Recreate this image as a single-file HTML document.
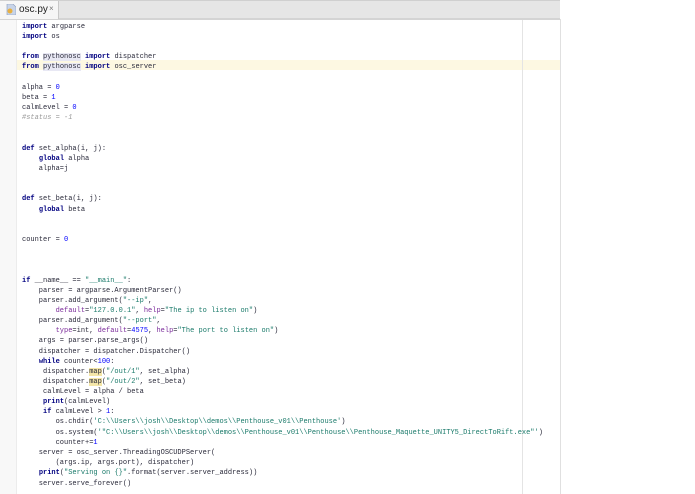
<!DOCTYPE html>
<html><head><meta charset="utf-8"><style>
body{margin:0;width:695px;height:494px;background:#fff;position:relative;overflow:hidden;font-family:"Liberation Mono",monospace}
#tabbar{position:absolute;left:0;top:0;width:560px;height:17px;background:#e6e6e6;border-top:1px solid #d0d0d0;border-bottom:2px solid #d4d4d4}
#tab{position:absolute;left:0;top:0;width:58px;height:18px;background:#f6f6f6;border-right:1px solid #c8c8c8;font-family:"Liberation Sans",sans-serif;font-size:10px;color:#222}
#ed{position:absolute;left:0;top:19px;width:560px;height:475px;background:#fff;border-right:1px solid #e0e0e0}
#gut{position:absolute;left:0;top:19px;width:16px;height:475px;background:#f8f8f8;border-right:1px solid #ececec}
#margin{position:absolute;left:522px;top:19px;width:1px;height:475px;background:#e4e4e4}
.hl{position:absolute;left:0;top:60px;width:560px;height:10px;background:#fdf8e2}
.l{position:absolute;font-size:7px;line-height:10px;white-space:pre;color:#2a2a3a;height:10px;margin-top:2px}
.k{color:#000080;font-weight:bold}
.s{color:#1a7a6a}
.n{color:#0000ff}
.p{color:#7a2a9a}
.c{color:#999;font-style:italic}
.m{background:#f4e6a8}
.b{background:#e8e8f4}
</style></head><body>
<div id="ed"></div><div class="hl"></div><div id="gut"></div><div id="margin"></div>
<div id="tabbar"><div id="tab"><svg style="position:absolute;left:6px;top:3px" width="10" height="11"><path d="M1 0h6l3 3v8H1z" fill="#c8d4e8" stroke="#8898b8" stroke-width=".6"/><circle cx="4" cy="7" r="2.5" fill="#e8b040"/></svg><span style="position:absolute;left:19px;top:3px">osc.py</span><span style="position:absolute;left:49px;top:3px;font-size:8px;color:#777">×</span></div></div>
<div class="l" style="left:22px;top:20px"><span class="k">import</span> argparse</div>
<div class="l" style="left:22px;top:30px"><span class="k">import</span> os</div>
<div class="l" style="left:22px;top:50px"><span class="k">from</span> <span class="b">pythonosc</span> <span class="k">import</span> dispatcher</div>
<div class="l" style="left:22px;top:60px"><span class="k">from</span> <span class="b">pythonosc</span> <span class="k">import</span> osc_server</div>
<div class="l" style="left:22px;top:81px">alpha = <span class="n">0</span></div>
<div class="l" style="left:22px;top:91px">beta = <span class="n">1</span></div>
<div class="l" style="left:22px;top:101px">calmLevel = <span class="n">0</span></div>
<div class="l" style="left:22px;top:111px"><span class="c">#status = -1</span></div>
<div class="l" style="left:22px;top:142px"><span class="k">def</span> set_alpha(i, j):</div>
<div class="l" style="left:22px;top:152px">    <span class="k">global</span> alpha</div>
<div class="l" style="left:22px;top:162px">    alpha=j</div>
<div class="l" style="left:22px;top:192px"><span class="k">def</span> set_beta(i, j):</div>
<div class="l" style="left:22px;top:203px">    <span class="k">global</span> beta</div>
<div class="l" style="left:22px;top:233px">counter = <span class="n">0</span></div>
<div class="l" style="left:22px;top:274px"><span class="k">if</span> __name__ == <span class="s">"__main__"</span>:</div>
<div class="l" style="left:22px;top:284px">    parser = argparse.ArgumentParser()</div>
<div class="l" style="left:22px;top:294px">    parser.add_argument(<span class="s">"--ip"</span>,</div>
<div class="l" style="left:22px;top:304px">        <span class="p">default</span>=<span class="s">"127.0.0.1"</span>, <span class="p">help</span>=<span class="s">"The ip to listen on"</span>)</div>
<div class="l" style="left:22px;top:314px">    parser.add_argument(<span class="s">"--port"</span>,</div>
<div class="l" style="left:22px;top:324px">        <span class="p">type</span>=int, <span class="p">default</span>=<span class="n">4575</span>, <span class="p">help</span>=<span class="s">"The port to listen on"</span>)</div>
<div class="l" style="left:22px;top:334px">    args = parser.parse_args()</div>
<div class="l" style="left:22px;top:345px">    dispatcher = dispatcher.Dispatcher()</div>
<div class="l" style="left:22px;top:355px">    <span class="k">while</span> counter&lt;<span class="n">100</span>:</div>
<div class="l" style="left:22px;top:365px">     dispatcher.<span class="m">map</span>(<span class="s">"/out/1"</span>, set_alpha)</div>
<div class="l" style="left:22px;top:375px">     dispatcher.<span class="m">map</span>(<span class="s">"/out/2"</span>, set_beta)</div>
<div class="l" style="left:22px;top:385px">     calmLevel = alpha / beta</div>
<div class="l" style="left:22px;top:395px">     <span class="k">print</span>(calmLevel)</div>
<div class="l" style="left:22px;top:405px">     <span class="k">if</span> calmLevel &gt; <span class="n">1</span>:</div>
<div class="l" style="left:22px;top:415px">        os.chdir(<span class="s">'C:\\Users\\josh\\Desktop\\demos\\Penthouse_v01\\Penthouse'</span>)</div>
<div class="l" style="left:22px;top:426px">        os.system(<span class="s">'"C:\\Users\\josh\\Desktop\\demos\\Penthouse_v01\\Penthouse\\Penthouse_Maquette_UNITY5_DirectToRift.exe"'</span>)</div>
<div class="l" style="left:22px;top:436px">        counter+=<span class="n">1</span></div>
<div class="l" style="left:22px;top:446px">    server = osc_server.ThreadingOSCUDPServer(</div>
<div class="l" style="left:22px;top:456px">        (args.ip, args.port), dispatcher)</div>
<div class="l" style="left:22px;top:466px">    <span class="k">print</span>(<span class="s">"Serving on {}"</span>.format(server.server_address))</div>
<div class="l" style="left:22px;top:477px">    server.serve_forever()</div>
</body></html>
